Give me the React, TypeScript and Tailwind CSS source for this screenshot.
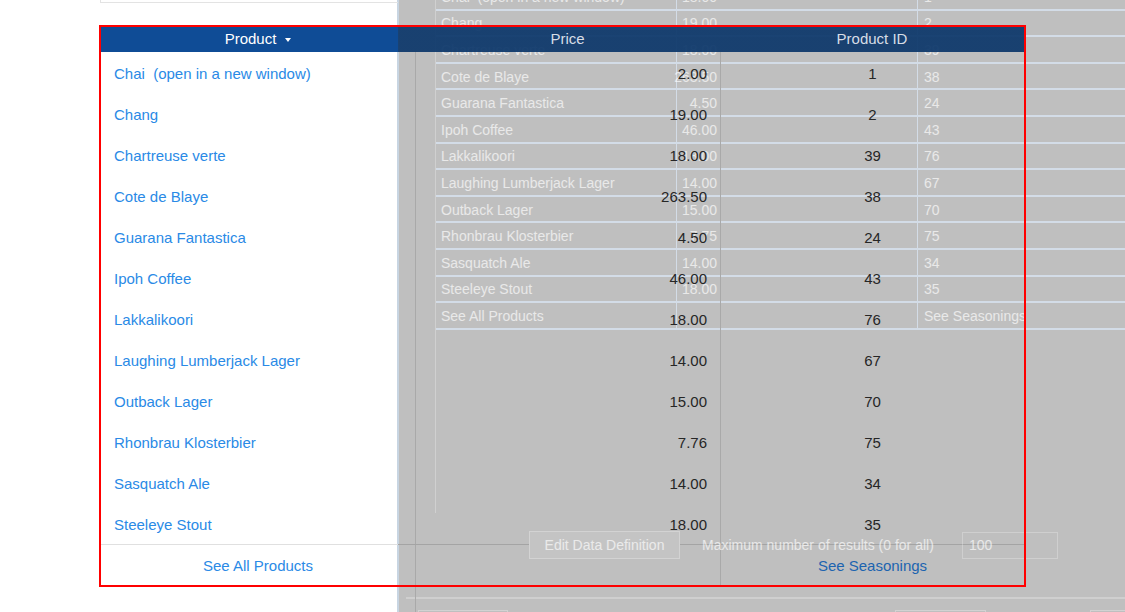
import React from 'react';

const rows = [
  { name: 'Chai  (open in a new window)', price: '2.00', id: '1' },
  { name: 'Chang', price: '19.00', id: '2' },
  { name: 'Chartreuse verte', price: '18.00', id: '39' },
  { name: 'Cote de Blaye', price: '263.50', id: '38' },
  { name: 'Guarana Fantastica', price: '4.50', id: '24' },
  { name: 'Ipoh Coffee', price: '46.00', id: '43' },
  { name: 'Lakkalikoori', price: '18.00', id: '76' },
  { name: 'Laughing Lumberjack Lager', price: '14.00', id: '67' },
  { name: 'Outback Lager', price: '15.00', id: '70' },
  { name: 'Rhonbrau Klosterbier', price: '7.76', id: '75' },
  { name: 'Sasquatch Ale', price: '14.00', id: '34' },
  { name: 'Steeleye Stout', price: '18.00', id: '35' },
];

// faded copy of the list that shows through the grey pane
const ghostRows = [
  { name: 'Chai  (open in a new window)', price: '18.00', id: '1' },
  { name: 'Chang', price: '19.00', id: '2' },
  { name: 'Chartreuse verte', price: '18.00', id: '39' },
  { name: 'Cote de Blaye', price: '263.50', id: '38' },
  { name: 'Guarana Fantastica', price: '4.50', id: '24' },
  { name: 'Ipoh Coffee', price: '46.00', id: '43' },
  { name: 'Lakkalikoori', price: '18.00', id: '76' },
  { name: 'Laughing Lumberjack Lager', price: '14.00', id: '67' },
  { name: 'Outback Lager', price: '15.00', id: '70' },
  { name: 'Rhonbrau Klosterbier', price: '7.75', id: '75' },
  { name: 'Sasquatch Ale', price: '14.00', id: '34' },
  { name: 'Steeleye Stout', price: '18.00', id: '35' },
  { name: 'See All Products', price: '', id: 'See Seasonings' },
];

function ProductTable() {
  return (
    <div className="relative ml-[101px] mt-[24px] w-[923px] text-[15px]">
      <div className="grid h-[25px] grid-cols-[314px_305px_304px] items-center bg-[linear-gradient(to_right,#0f4c96_297px,rgba(12,55,106,0.93)_297px)]">
        <div className="flex items-center justify-center gap-[9px] text-white">
          <span>Product</span>
          <svg width="6" height="4" viewBox="0 0 6 4" className="mt-[1px]">
            <path d="M0 0h6L3 4z" fill="#fff" />
          </svg>
        </div>
        <div className="text-center text-[#d6dde6]">Price</div>
        <div className="text-center text-[#d6dde6]">Product ID</div>
      </div>
      {rows.map((r) => (
        <div key={r.name} className="grid h-[41px] grid-cols-[314px_305px_304px]">
          <div className="flex items-center pl-[13px] pt-[4px] whitespace-pre text-[#2a8ae6]">{r.name}</div>
          <div className="flex items-center justify-end border-l border-[#a9a9a9] pr-[13px] pt-[4px] text-[#262626]">{r.price}</div>
          <div className="flex items-center justify-center border-l border-[#a9a9a9] pt-[4px] text-[#262626]">{r.id}</div>
        </div>
      ))}
      <div className="h-px bg-[linear-gradient(to_right,#e0e0e0_297px,#a4a4a4_297px)]" />
      <div className="grid h-[40px] grid-cols-[314px_305px_304px]">
        <div className="flex items-center justify-center pt-[3px] text-[#2a8ae6]">See All Products</div>
        <div className="border-l border-[#a9a9a9]" />
        <div className="flex items-center justify-center border-l border-[#a9a9a9] pt-[3px] text-[#1c64b0]">See Seasonings</div>
      </div>
    </div>
  );
}

function GhostRows() {
  return (
    <>
      <div className="absolute left-[436px] right-0 top-[-16px] text-[14px] text-white/65">
        {ghostRows.map((r) => (
          <div key={r.name} className="grid h-[26.6px] grid-cols-[240px_45px_196px_1fr] border-b-2 border-[#d3dce7]">
            <div className="flex items-center pl-[5px] pt-[2px] whitespace-pre">{r.name}</div>
            <div className="flex items-center justify-end border-l border-[#d3dce7] pr-[4px] pt-[2px]">{r.price}</div>
            <div />
            <div className="flex items-center border-l border-[#d3dce7] pl-[6px] pt-[2px]">{r.id}</div>
          </div>
        ))}
      </div>
      <div className="absolute left-[435px] top-0 h-[513px] w-px bg-[#d0d0d0]" />
    </>
  );
}

function GhostControls() {
  return (
    <>
      <div className="absolute left-[529px] top-[531px] flex items-center text-[14px] text-white/65">
        <div className="flex h-[28px] w-[151px] items-center justify-center border border-white/25 bg-[#c4c4c4]">
          Edit Data Definition
        </div>
        <span className="ml-[22px] w-[260px]">Maximum number of results (0 for all)</span>
        <div className="flex h-[27px] w-[96px] items-center border border-white/25 pl-[6px]">100</div>
      </div>

      <div className="absolute left-[406px] right-0 top-[597px] h-[2px] bg-white/25" />
      <div className="absolute left-[415px] top-[585px] h-[27px] w-px bg-[#a9a9a9]" />
      <div className="absolute left-[418px] top-[610px] h-[12px] w-[90px] border border-white/30" />
      <div className="absolute left-[895px] top-[610px] h-[12px] w-[91px] border border-white/30" />
      <div className="absolute left-[1090px] top-[610px] h-[12px] w-[60px] border border-white/30" />
    </>
  );
}

export default function App() {
  return (
    <div className="relative h-[612px] w-[1125px] overflow-hidden bg-white font-['Liberation_Sans',Arial,sans-serif]">
      {/* grey pane over the right side, with the faded list on it */}
      <div className="absolute bottom-0 left-[399px] right-0 top-0 bg-[#bfbfbf]" />
      <div className="absolute bottom-0 left-[397px] top-0 w-[2px] bg-[#c8d5e2]" />
      <GhostRows />

      <div className="relative ml-[100px] h-[3px] w-[298px] border-b border-l border-[#e3e3e3]" />
      <ProductTable />

      <GhostControls />

      {/* highlight outline */}
      <div className="pointer-events-none absolute left-[99px] top-[25px] h-[562px] w-[927px] border-2 border-[#ff0000]" />
    </div>
  );
}
